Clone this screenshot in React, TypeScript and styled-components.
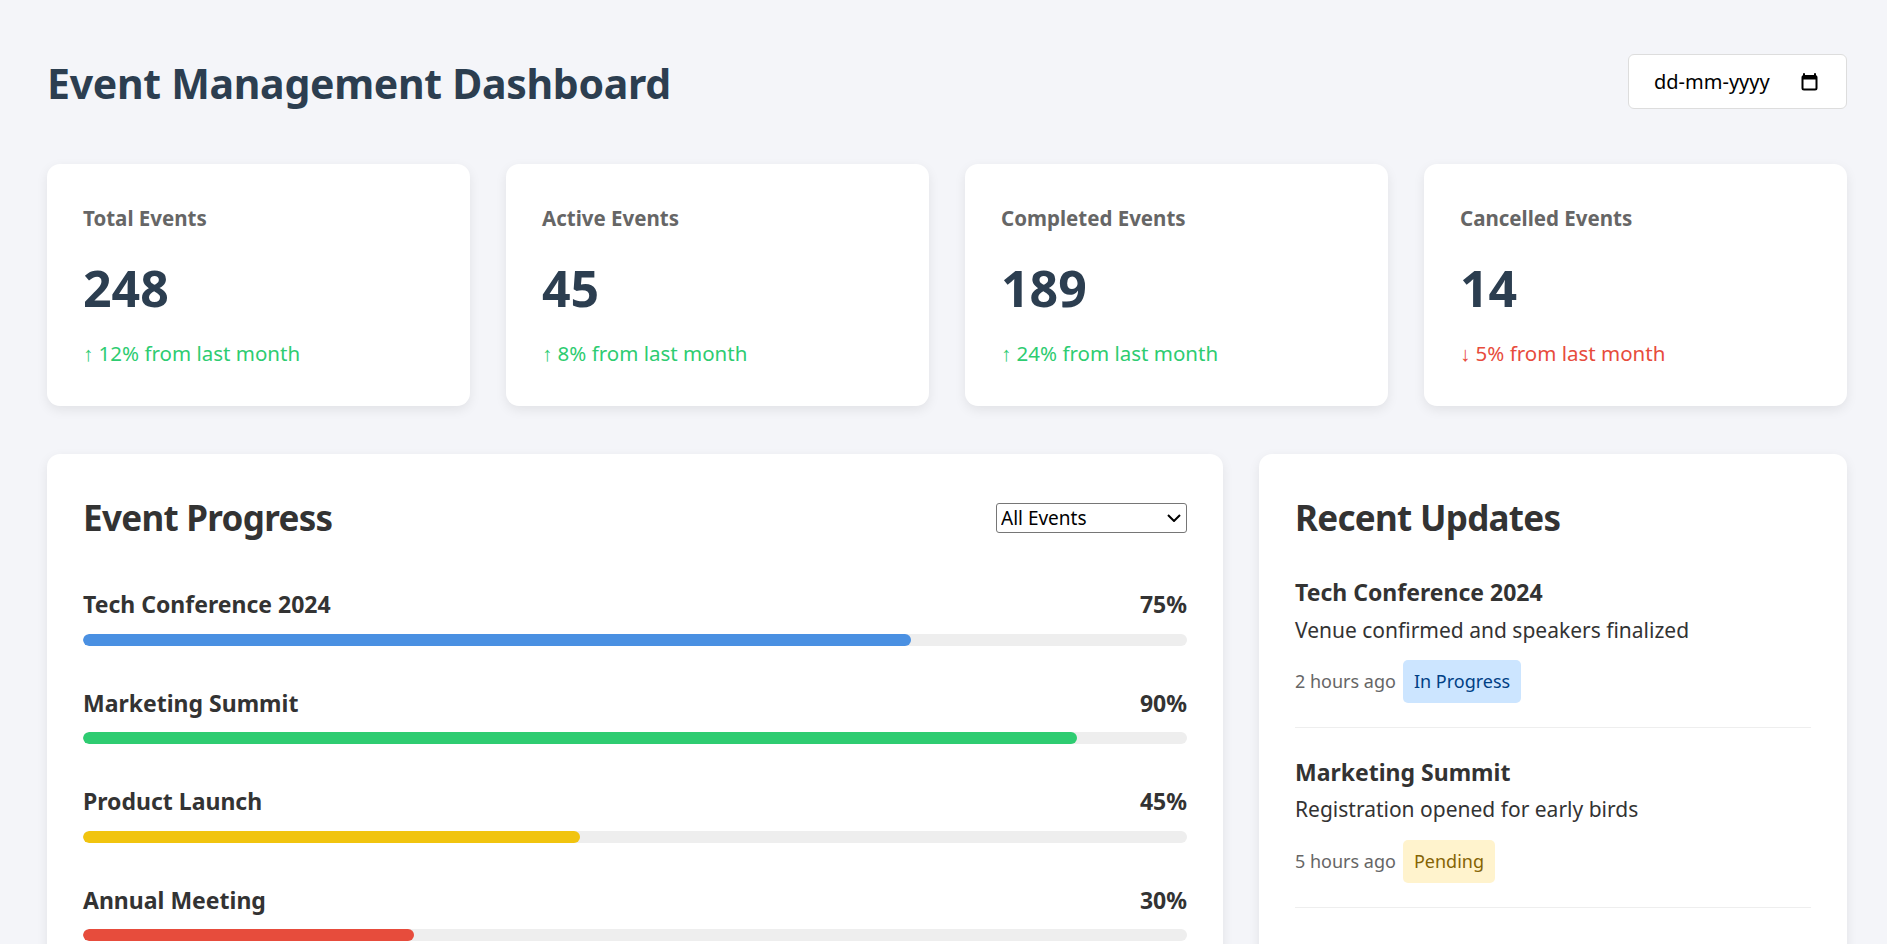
import React from "react";
import styled, { createGlobalStyle } from "styled-components";

const GlobalStyle = createGlobalStyle`
  html, body { margin: 0; padding: 0; background: #f4f5f9; }
  body { font-family: "Noto Sans", "Open Sans", Arial, sans-serif; color: #333; }
  * { box-sizing: border-box; }
`;

const Page = styled.div`
  padding: 54px 40px 40px 47px;
`;

const Header = styled.header`
  display: flex;
  justify-content: space-between;
  align-items: center;
  margin-bottom: 55px;
`;

const Title = styled.h1`
  margin: 0;
  padding-top: 5px;
  font-size: 41px;
  letter-spacing: -0.3px;
  line-height: 1.2;
  font-weight: 700;
  color: #2c3e50;
`;

const DateField = styled.div`
  width: 219px;
  height: 55px;
  background: #fff;
  border: 1px solid #ddd;
  border-radius: 6px;
  display: flex;
  align-items: center;
  justify-content: space-between;
  padding: 0 28px 0 25px;
  font-size: 20px;
  color: #000;
`;

const StatsGrid = styled.div`
  display: grid;
  grid-template-columns: repeat(4, 1fr);
  gap: 36px;
  margin-bottom: 48px;
`;

const Card = styled.div`
  background: #fff;
  border-radius: 13px;
  box-shadow: 0 4px 12px rgba(0, 0, 0, 0.08);
`;

const StatCard = styled(Card)`
  padding: 42px 36px 36px;
  height: 242px;
`;

const StatLabel = styled.div`
  font-size: 20.5px;
  line-height: 1.2;
  font-weight: 700;
  color: #666;
`;

const StatValue = styled.div`
  margin-top: 27px;
  font-size: 50px;
  line-height: 1.2;
  font-weight: 700;
  color: #2c3e50;
`;

const StatChange = styled.div<{ $down?: boolean }>`
  margin-top: 23px;
  font-size: 20.5px;
  line-height: 1.2;
  color: ${(p) => (p.$down ? "#e74c3c" : "#2ecc71")};
`;

const MainGrid = styled.div`
  display: grid;
  grid-template-columns: 2fr 1fr;
  gap: 36px;
`;

const Panel = styled(Card)`
  padding: 43px 36px 36px;
`;

const PanelHeader = styled.div<{ $gap: number }>`
  display: flex;
  justify-content: space-between;
  align-items: center;
  margin-bottom: ${(p) => p.$gap}px;
`;

const PanelTitle = styled.h2`
  margin: 0;
  font-size: 35px;
  letter-spacing: -0.7px;
  line-height: 1.2;
  font-weight: 700;
  color: #333;
`;

const chevron =
  "data:image/svg+xml;utf8," +
  encodeURIComponent(
    '<svg xmlns="http://www.w3.org/2000/svg" width="14" height="8" viewBox="0 0 14 8"><path d="M1 1l6 6 6-6" fill="none" stroke="#000" stroke-width="2"/></svg>'
  );

const Select = styled.select`
  appearance: none;
  -webkit-appearance: none;
  width: 191px;
  height: 30px;
  font-family: "Noto Sans", "Open Sans", Arial, sans-serif;
  font-size: 19px;
  line-height: 1;
  color: #000;
  background: #fff url("${chevron}") no-repeat right 5px center;
  border: 1px solid #767676;
  border-radius: 3px;
  padding: 0 24px 0 4px;
`;

const ProgressItem = styled.div`
  margin-bottom: 44px;
`;

const ProgressHead = styled.div`
  display: flex;
  justify-content: space-between;
  font-size: 23px;
  line-height: 1.2;
  font-weight: 700;
  color: #333;
  margin-bottom: 15px;
`;

const Track = styled.div`
  height: 12px;
  border-radius: 6px;
  background: #eee;
  overflow: hidden;
`;

const Fill = styled.div<{ $color: string }>`
  height: 100%;
  border-radius: 6px;
  background: ${(p) => p.$color};
`;

const UpdateItem = styled.div`
  padding-bottom: 24px;
  border-bottom: 1px solid #eee;
  margin-bottom: 31px;
`;

const UpdateTitle = styled.div`
  font-size: 23px;
  line-height: 1.2;
  font-weight: 700;
  color: #333;
  margin-bottom: 11px;
`;

const UpdateText = styled.div`
  font-size: 21px;
  line-height: 1.2;
  color: #333;
  margin-bottom: 17px;
`;

const Meta = styled.div`
  display: flex;
  align-items: center;
  gap: 7px;
  font-size: 18px;
  color: #666;
`;

const Badge = styled.span<{ $kind: "progress" | "pending" }>`
  display: inline-block;
  padding: 9px 11px;
  border-radius: 5px;
  font-size: 18px;
  line-height: 25px;
  background: ${(p) => (p.$kind === "progress" ? "#cce5ff" : "#fff3cd")};
  color: ${(p) => (p.$kind === "progress" ? "#004085" : "#856404")};
`;

const CalendarIcon = () => (
  <svg width="17" height="18" viewBox="0 0 17 18" aria-hidden="true">
    <path d="M3 1v2M14 1v2" stroke="#000" strokeWidth="2" strokeLinecap="round" />
    <rect x="1.5" y="3" width="14" height="13.5" rx="1.5" fill="none" stroke="#000" strokeWidth="2" />
    <rect x="1.5" y="3" width="14" height="3.5" fill="#000" />
  </svg>
);

const stats = [
  { label: "Total Events", value: "248", change: "↑ 12% from last month" },
  { label: "Active Events", value: "45", change: "↑ 8% from last month" },
  { label: "Completed Events", value: "189", change: "↑ 24% from last month" },
  { label: "Cancelled Events", value: "14", change: "↓ 5% from last month", down: true },
];

const progress = [
  { name: "Tech Conference 2024", pct: 75, color: "#4a90e2" },
  { name: "Marketing Summit", pct: 90, color: "#2ecc71" },
  { name: "Product Launch", pct: 45, color: "#f1c40f" },
  { name: "Annual Meeting", pct: 30, color: "#e74c3c" },
];

const updates: { title: string; text: string; time: string; status: string; kind: "progress" | "pending" }[] = [
  { title: "Tech Conference 2024", text: "Venue confirmed and speakers finalized", time: "2 hours ago", status: "In Progress", kind: "progress" },
  { title: "Marketing Summit", text: "Registration opened for early birds", time: "5 hours ago", status: "Pending", kind: "pending" },
];

export default function App() {
  return (
    <>
      <GlobalStyle />
      <Page>
        <Header>
          <Title>Event Management Dashboard</Title>
          <DateField>
            <span>dd-mm-yyyy</span>
            <CalendarIcon />
          </DateField>
        </Header>

        <StatsGrid>
          {stats.map((s) => (
            <StatCard key={s.label}>
              <StatLabel>{s.label}</StatLabel>
              <StatValue>{s.value}</StatValue>
              <StatChange $down={s.down}>{s.change}</StatChange>
            </StatCard>
          ))}
        </StatsGrid>

        <MainGrid>
          <Panel>
            <PanelHeader $gap={52}>
              <PanelTitle>Event Progress</PanelTitle>
              <Select defaultValue="all">
                <option value="all">All Events</option>
                <option value="active">Active</option>
                <option value="completed">Completed</option>
              </Select>
            </PanelHeader>
            {progress.map((p) => (
              <ProgressItem key={p.name}>
                <ProgressHead>
                  <span>{p.name}</span>
                  <span>{p.pct}%</span>
                </ProgressHead>
                <Track>
                  <Fill $color={p.color} style={{ width: `${p.pct}%` }} />
                </Track>
              </ProgressItem>
            ))}
          </Panel>

          <Panel>
            <PanelHeader $gap={40}>
              <PanelTitle>Recent Updates</PanelTitle>
            </PanelHeader>
            {updates.map((u) => (
              <UpdateItem key={u.title}>
                <UpdateTitle>{u.title}</UpdateTitle>
                <UpdateText>{u.text}</UpdateText>
                <Meta>
                  <span>{u.time}</span>
                  <Badge $kind={u.kind}>{u.status}</Badge>
                </Meta>
              </UpdateItem>
            ))}
          </Panel>
        </MainGrid>
      </Page>
    </>
  );
}
